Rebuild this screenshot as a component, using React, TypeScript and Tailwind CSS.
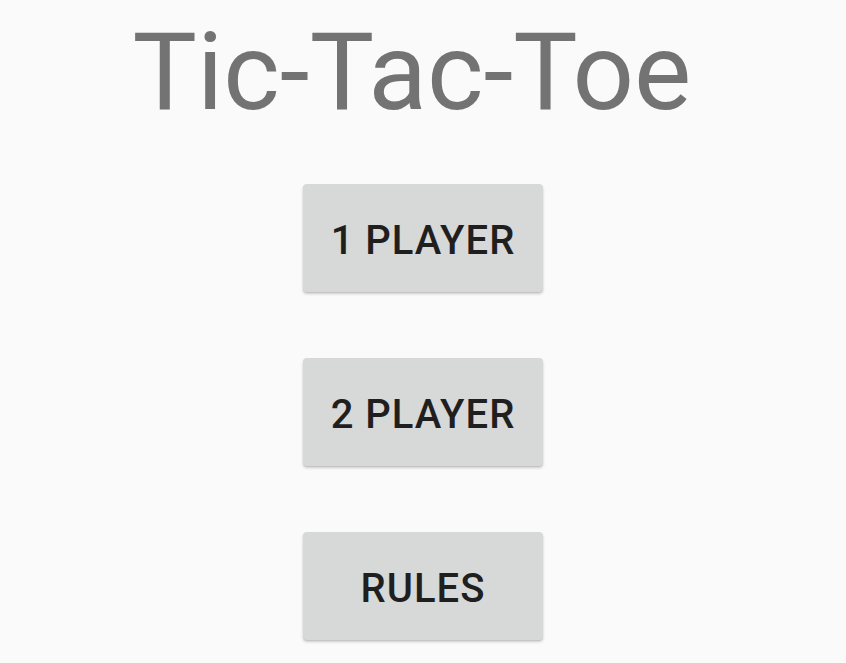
import React from "react";

const Btn = ({ label }: { label: string }) => (
  <button className="flex h-[108px] w-[240px] items-center justify-center rounded-[4px] bg-[#d7d8d8] pt-[6px] text-[40px] font-medium tracking-[0.025em] text-[#1f1f1f] shadow-[0_2px_3px_rgba(0,0,0,0.18),0_1px_1px_rgba(0,0,0,0.08)]">
    {label}
  </button>
);

export default function App() {
  return (
    <div className="flex min-h-[663px] w-full flex-col items-center bg-[#fafafa] pt-[18px] font-['Roboto',sans-serif]">
      <h1 className="mr-[22px] h-[108px] text-[108px] font-normal leading-none text-[#737373]">Tic-Tac-Toe</h1>
      <div className="mt-[58px] flex flex-col items-center gap-[66px]">
        <Btn label="1 PLAYER" />
        <Btn label="2 PLAYER" />
        <Btn label="RULES" />
      </div>
    </div>
  );
}
